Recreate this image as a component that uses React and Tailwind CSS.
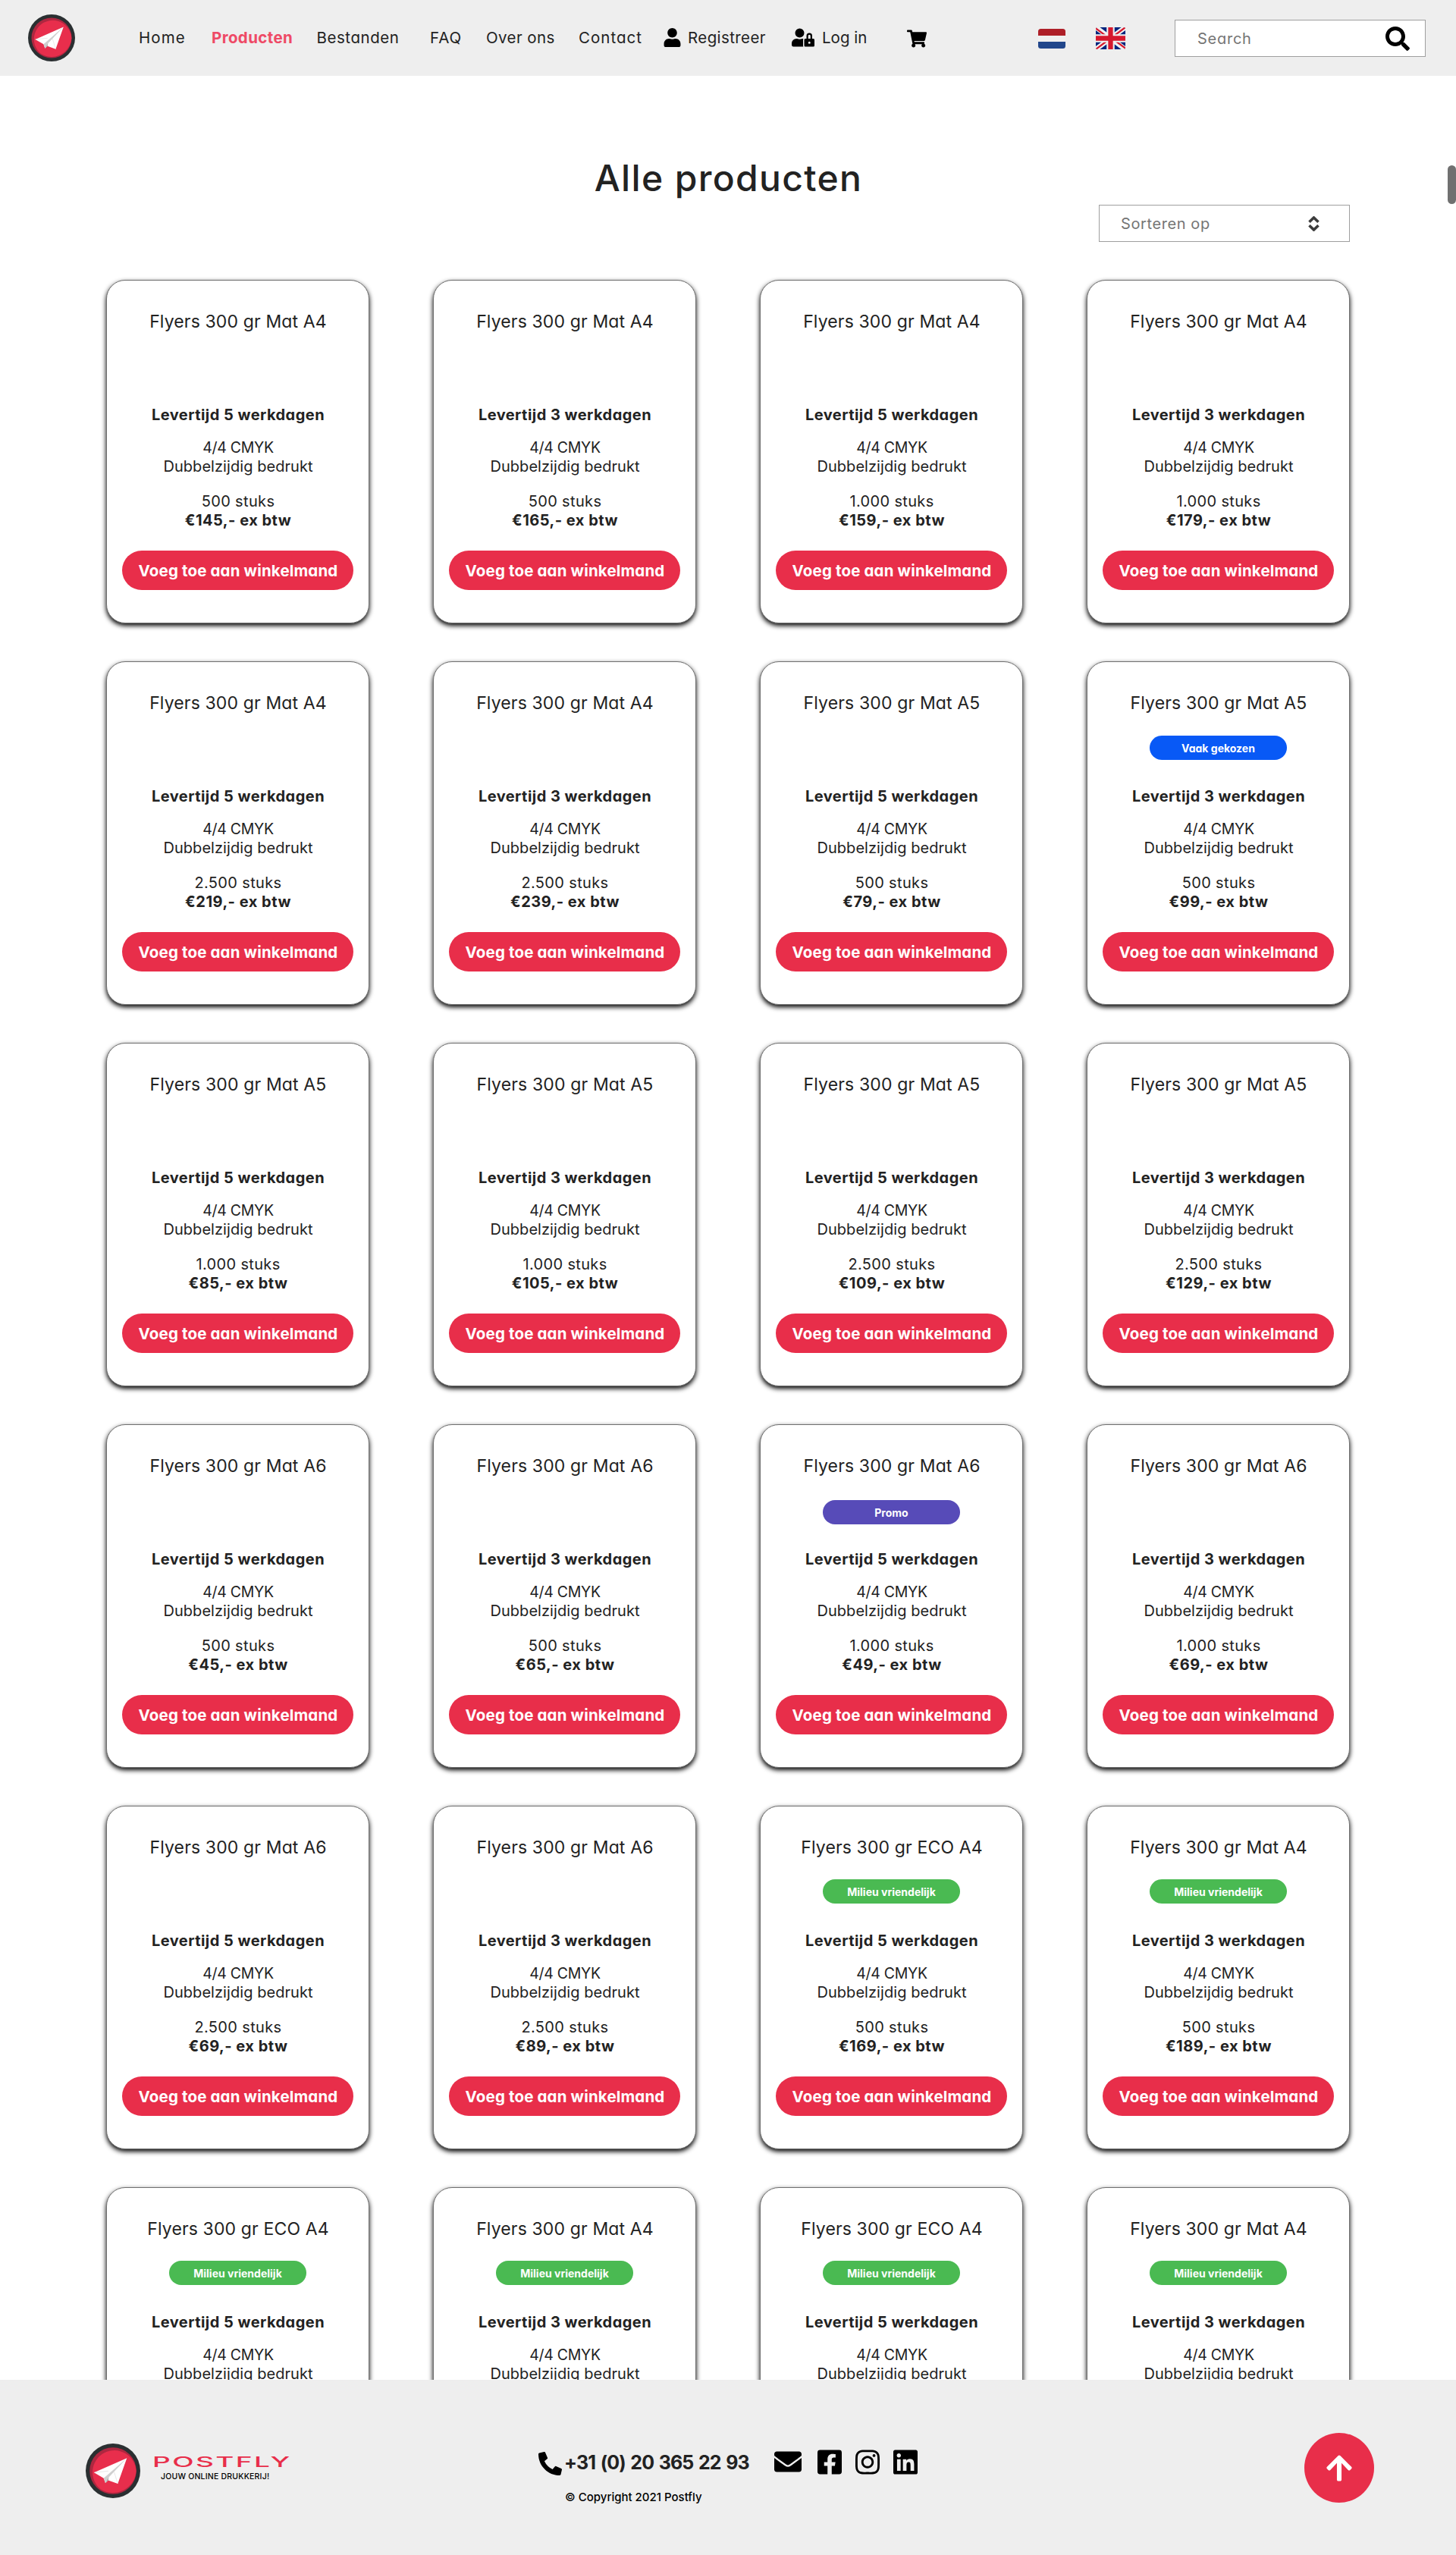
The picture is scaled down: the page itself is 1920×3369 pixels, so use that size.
import React from "react";
import {
  FaUser,
  FaUserLock,
  FaShoppingCart,
  FaSearch,
  FaPhoneAlt,
  FaEnvelope,
  FaFacebookSquare,
  FaInstagram,
  FaLinkedin,
  FaArrowUp,
} from "react-icons/fa";

const ECO = "Milieu vriendelijk";

const products = [
  ["Mat A4", 5, "500", 145],
  ["Mat A4", 3, "500", 165],
  ["Mat A4", 5, "1.000", 159],
  ["Mat A4", 3, "1.000", 179],
  ["Mat A4", 5, "2.500", 219],
  ["Mat A4", 3, "2.500", 239],
  ["Mat A5", 5, "500", 79],
  ["Mat A5", 3, "500", 99, "Vaak gekozen"],
  ["Mat A5", 5, "1.000", 85],
  ["Mat A5", 3, "1.000", 105],
  ["Mat A5", 5, "2.500", 109],
  ["Mat A5", 3, "2.500", 129],
  ["Mat A6", 5, "500", 45],
  ["Mat A6", 3, "500", 65],
  ["Mat A6", 5, "1.000", 49, "Promo"],
  ["Mat A6", 3, "1.000", 69],
  ["Mat A6", 5, "2.500", 69],
  ["Mat A6", 3, "2.500", 89],
  ["ECO A4", 5, "500", 169, ECO],
  ["Mat A4", 3, "500", 189, ECO],
];

const lastRow = [
  ["ECO A4", 5],
  ["Mat A4", 3],
  ["ECO A4", 5],
  ["Mat A4", 3],
].map(([kind, days]) => [kind, days, null, null, ECO]);

const badgeStyles = {
  "Vaak gekozen": "bg-[#0859f6]",
  Promo: "mt-[2px] bg-[#574bb8]",
  [ECO]: "-mt-px bg-[#4aba52]",
};

function Logo({ className }) {
  return (
    <svg viewBox="0 0 72 72" className={className}>
      <circle cx="36" cy="36" r="36" fill="#2a2f31" />
      <circle cx="36" cy="36" r="30.8" fill="#ae2740" />
      <path d="M66.6 36.5A28.8 28.8 0 1 0 20 60.500A30.800 30.800 0 0 0 66.600 36.500Z" fill="#e82e4c" />
      <path d="M54.300 19.300L11 38.300L23.700 45.700L26 52L29.700 48.500L42.300 53Z" fill="#fff" />
      <path d="M54.300 19.300L23.700 45.700L26 52L30.500 44.500Z" fill="#cfcfcf" />
      <path d="M30.500 44.500L26 52L29.700 48.500Z" fill="#9d9d9d" />
      <path d="M11 38.300L30 36.300M37.500 37.500L42.300 53" stroke="#dedede" strokeWidth=".7" fill="none" />
    </svg>
  );
}

function FlagNL() {
  return (
    <svg viewBox="0 0 36 26" className="mt-px ml-[147px] h-[26px] w-9 shrink-0">
      <clipPath id="nl">
        <rect width="36" height="26" rx="3.500" />
      </clipPath>
      <g clipPath="url(#nl)">
        <rect width="36" height="26" fill="#f0f0f0" />
        <rect width="36" height="9" fill="#ae1f28" />
        <rect y="17" width="36" height="9" fill="#21468b" />
      </g>
    </svg>
  );
}

function FlagUK() {
  return (
    <svg viewBox="0 0 39 29" className="ml-[40px] h-[29px] w-[39px] shrink-0">
      <clipPath id="uk">
        <rect width="39" height="29" rx="2" />
      </clipPath>
      <g clipPath="url(#uk)">
        <rect width="39" height="29" fill="#00247d" />
        <path d="M0 0L39 29M39 0L0 29" stroke="#f0f0f0" strokeWidth="6.500" />
        <path d="M0 1.500L15 12.500M39 0L23 12M39 27.500L24 16.500M0 29L16 17" stroke="#d6182d" strokeWidth="2.200" />
        <path d="M19.500 0V29M0 14.500H39" stroke="#f0f0f0" strokeWidth="10.500" />
        <path d="M19.500 0V29M0 14.500H39" stroke="#d6182d" strokeWidth="6.300" />
      </g>
    </svg>
  );
}

function Header() {
  return (
    <header className="flex h-[100px] items-center bg-[#eeeeee] pl-[37px] text-[20.5px] whitespace-nowrap">
      <Logo className="h-[62px] w-[62px] shrink-0" />
      <nav className="mt-px ml-[83px] flex items-center">
        <a className="w-[96px] pl-px tracking-[1.1px]">Home</a>
        <a className="w-[139.5px] pl-px font-bold tracking-[0.38px] text-[#ee4a66]">Producten</a>
        <a className="w-[149.5px] tracking-[0.55px]">Bestanden</a>
        <a className="w-[74px] tracking-[0.9px]">FAQ</a>
        <a className="w-[122px] tracking-[0.4px]">Over ons</a>
        <a className="w-[112px] tracking-[1px]">Contact</a>
        <FaUser className="-mt-[3px] h-[25px] w-[23px] text-black" />
        <a className="ml-[9px] w-[137px] tracking-[0.4px]">Registreer</a>
        <FaUserLock className="-mt-[3px] h-[25px] w-[30px] text-black" />
        <a className="ml-[10px] w-[112px]">Log in</a>
        <FaShoppingCart className="h-[24px] w-[26px] text-black" />
      </nav>
      <FlagNL />
      <FlagUK />
      <div className="mt-px ml-[65px] flex h-[49px] w-[331px] items-center justify-between border border-[#9f9f9f] bg-white pr-[20px] pl-[29px]">
        <span className="mt-px text-[20px] tracking-[0.75px] text-[#757575]">Search</span>
        <FaSearch className="h-8 w-8 text-black" />
      </div>
    </header>
  );
}

function ProductCard({ product }) {
  const [kind, days, amount, price, badge] = product;
  return (
    <article className="flex h-[453px] flex-col items-center rounded-[25px] border border-[#707070] bg-white pt-[39px] text-[20px] leading-[25px] whitespace-nowrap shadow-[0_3px_6px_#000000]">
      <h2 className="pl-px text-[23px] leading-[30px] tracking-[0.14px]">Flyers 300 gr {kind}</h2>
      <div className="mt-7 h-8">
        {badge && (
          <div
            className={
              "flex h-8 w-[181px] items-center justify-center rounded-full text-[14px] font-bold text-white " +
              badgeStyles[badge]
            }
          >
            {badge}
          </div>
        )}
      </div>
      <p className="mt-[36px] pl-px font-bold tracking-[0.46px]">Levertijd {days} werkdagen</p>
      <p className="mt-[18px] pl-px text-[19.5px] font-[370] tracking-[-0.28px]">4/4 CMYK</p>
      <p className="pl-px font-[370] tracking-[0.06px]">Dubbelzijdig bedrukt</p>
      {amount && (
        <>
          <p className="mt-[21px] pl-px tracking-[0.35px]">{amount} stuks</p>
          <p className="pl-px font-bold tracking-[0.5px]">€{price},- ex btw</p>
          <button className="mt-[27px] h-[52px] w-[305px] shrink-0 rounded-full bg-[#e82e4a] pl-px text-[20.5px] font-bold tracking-[0.15px] text-white">
            Voeg toe aan winkelmand
          </button>
        </>
      )}
    </article>
  );
}

function Footer() {
  return (
    <footer className="flex h-[231px] items-start bg-[#eeeeee] pl-[113px] whitespace-nowrap">
      <Logo className="mt-[84px] h-[72px] w-[72px] shrink-0" />
      <div className="mt-[98px] ml-[16px] w-[509px]">
        <div className="w-fit origin-left scale-x-[2] text-[18.5px] leading-[21px] font-medium tracking-[1.2px] text-[#e82e4a]">
          POSTFLY
        </div>
        <div className="mt-[2px] ml-[11px] w-fit text-[10.5px] leading-[14px] font-medium tracking-[0.2px] text-black">
          JOUW ONLINE DRUKKERIJ!
        </div>
      </div>
      <div className="mt-[90px]">
        <div className="flex items-center">
          <FaPhoneAlt className="mt-[4px] h-[31px] w-[31px] text-black" />
          <span className="ml-[3px] w-[277px] text-[25px] leading-[34px] font-bold tracking-[-0.85px] [word-spacing:1.4px]">
            +31 (0) 20 365 22 93
          </span>
          <FaEnvelope className="-mt-px h-9 w-9 text-black" />
          <FaFacebookSquare className="ml-[21px] h-[37px] w-8 text-black" />
          <FaInstagram className="ml-[18px] h-[37px] w-8 text-black" />
          <FaLinkedin className="ml-[18px] h-[37px] w-8 text-black" />
        </div>
        <p className="mt-[18px] ml-[35px] text-[15px] leading-5 font-medium text-black">© Copyright 2021 Postfly</p>
      </div>
      <button className="mt-[70px] ml-[510px] flex h-[92px] w-[92px] shrink-0 items-center justify-center rounded-full bg-[#e82e4a]">
        <FaArrowUp className="h-[39px] w-[38px] text-white" />
      </button>
    </footer>
  );
}

export default function App() {
  return (
    <div className="relative w-[1920px] bg-white font-[Inter,'Open_Sans',sans-serif] text-[#222222] [font-feature-settings:'cv11']">
      <Header />
      <main className="h-[3038px] overflow-hidden px-[140px] pt-[107px]">
        <h1 className="pl-px text-center text-[48px] leading-[56px] font-medium tracking-[1.35px]">Alle producten</h1>
        <div className="mt-[7px] ml-auto flex h-[49px] w-[331px] items-center justify-between border border-[#9f9f9f] bg-white pr-[39px] pl-[28px]">
          <span className="mt-px text-[20px] tracking-[0.6px] text-[#757575]">Sorteren op</span>
          <svg viewBox="0 0 15 20" className="h-5 w-[15px]">
            <path d="M1.500 7.800L7.500 2L13.500 7.800M1.500 12.200L7.500 18L13.500 12.200" fill="none" stroke="#3c3c3c" strokeWidth="3.600" />
          </svg>
        </div>
        <div className="mt-[50px] grid grid-cols-4 gap-x-[84px] gap-y-[50px]">
          {[...products, ...lastRow].map((product, i) => (
            <ProductCard key={i} product={product} />
          ))}
        </div>
      </main>
      <Footer />
      <div className="absolute top-[218px] right-0 h-[51px] w-[11px] rounded-full bg-[#707070]" />
    </div>
  );
}
